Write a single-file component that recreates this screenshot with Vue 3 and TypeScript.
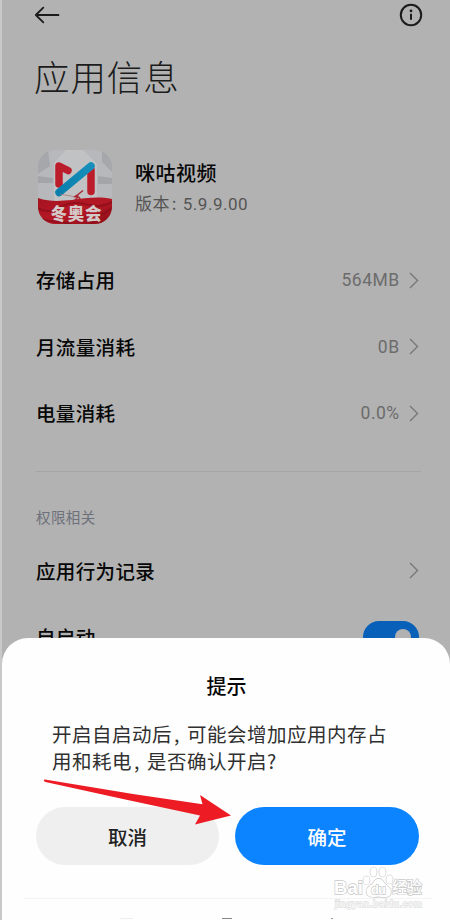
<script setup lang="ts">
interface InfoRow {
  label: string
  value: string
}

const usage: InfoRow[] = [
  { label: '存储占用', value: '564MB' },
  { label: '月流量消耗', value: '0B' },
  { label: '电量消耗', value: '0.0%' },
]
</script>

<template>
  <div class="screen">
    <main class="page">
      <header class="bar">
        <svg class="back" width="26" height="18" viewBox="0 0 26 18">
          <path d="M24.500 9H1.800M9.300 1.600L1.800 9l7.500 7.400" />
        </svg>
        <svg class="about" width="24" height="24" viewBox="0 0 24 24">
          <circle cx="12" cy="12" r="10.200" />
          <path class="stem" d="M12 10.800v6" />
          <circle class="dot" cx="12" cy="7.900" r="1.400" />
        </svg>
      </header>
      <h1 class="title">应用信息</h1>

      <section class="app">
        <svg class="logo" width="74" height="74" viewBox="0 0 74 74">
          <defs>
            <clipPath id="logo-clip"><rect width="74" height="74" rx="17" /></clipPath>
            <linearGradient id="wave" x1="0" y1="0" x2="1" y2="1">
              <stop offset="0" stop-color="#a51220" />
              <stop offset=".5" stop-color="#b51825" />
              <stop offset="1" stop-color="#8c0d18" />
            </linearGradient>
            <linearGradient id="stripe" x1="0" y1="1" x2="1" y2="0">
              <stop offset="0" stop-color="#087fac" />
              <stop offset="1" stop-color="#178fba" />
            </linearGradient>
          </defs>
          <g clip-path="url(#logo-clip)">
            <rect width="74" height="74" fill="#a5a7aa" />
            <path d="M10 0h54v12l10 10v35H0V24l12-8z" fill="#b7b8bb" />
            <path d="M28 0h17l14 14v38H16V13z" fill="#c1c2c4" />
            <path d="M0 26l15 2v5H0zM60 26l14 2v6H60z" fill="#a3a5a9" />
            <path d="M21 34V16l9 4.500M53 20v21.500" class="red-bar" />
            <path d="M21 42.500L53 16" class="blue-bar" />
            <path d="M22 44c5 1.500 10 1 15 3.500" class="trail" />
            <path d="M45 40.500l-5 4-3 2 4 1 2 3M40 45l-1 3-3 3" class="skier" />
            <path d="M0 48c12 4 22 3 34 2 14-2 26-4 40-1v25H0z" fill="url(#wave)" />
            <path d="M0 58c14 10 25-8 41-5s22 5 33-1" class="fold" />
            <path d="M0 67c10 6 21 3 33 7M74 58c-8 6-15 8-21 15" class="fold" />
          </g>
          <text class="logo-text" x="12.500" y="69.500" textLength="51">冬奥会</text>
        </svg>
        <div class="meta">
          <div class="name">咪咕视频</div>
          <div class="version">版本<span class="colon">:</span><span class="number">5.9.9.00</span></div>
        </div>
      </section>

      <ul class="rows usage">
        <li v-for="row in usage" :key="row.label" class="row">
          <span class="label">{{ row.label }}</span>
          <span class="value">{{ row.value }}</span>
          <svg class="chevron" width="10" height="17" viewBox="0 0 10 17"><path d="M1 1l7.500 7.500L1 16" /></svg>
        </li>
      </ul>

      <h2 class="section">权限相关</h2>
      <ul class="rows">
        <li class="row">
          <span class="label">应用行为记录</span>
          <svg class="chevron" width="10" height="17" viewBox="0 0 10 17"><path d="M1 1l7.500 7.500L1 16" /></svg>
        </li>
        <li class="row">
          <span class="label">自启动</span>
          <span class="switch"><span class="knob"></span></span>
        </li>
      </ul>
    </main>

    <section class="sheet">
      <h3 class="sheet-title">提示</h3>
      <p class="message">开启自启动后<span class="comma">,</span>可能会增加应用内存占<br />用和耗电<span class="comma">,</span>是否确认开启<span class="question">?</span></p>
      <div class="actions">
        <button class="btn cancel">取消</button>
        <button class="btn confirm">确定</button>
      </div>
      <div class="foot"><i class="tab-a"></i><i class="tab-b"></i><i class="tab-c"></i></div>
    </section>

    <svg class="arrow" width="190" height="50" viewBox="0 0 190 50">
      <path d="M3 .500C1.500.500 1.500 2.500 3.500 3L81 20l77 16.600-5 8.900L189 36.500 158 16l2.500 9.300-69.500-10.300z" />
    </svg>

    <svg class="mark" width="96" height="46" viewBox="0 0 96 46">
      <g class="outlined">
        <text class="brand" x="3" y="29.500" textLength="29">Bai</text>
        <path d="M35.500 28c-1-5 5-6 8-11 2.500-3 6-3 8.500 0 3 5 8 6 8 11 0 6-6 5.500-12 4.500-6 1-12 1-12.500-4.500z" />
        <ellipse cx="35.500" cy="16.500" rx="3.200" ry="4.200" />
        <ellipse cx="42.500" cy="8" rx="3.200" ry="4.700" />
        <ellipse cx="51.500" cy="8" rx="3.200" ry="4.700" />
        <ellipse cx="58.500" cy="15.500" rx="3.200" ry="4.200" />
        <text class="du" x="40" y="29.500" textLength="15">du</text>
        <text class="cn" x="61" y="29" textLength="30">经验</text>
      </g>
      <text class="url" x="4" y="42.500" textLength="87">jingyan.baidu.com</text>
    </svg>
  </div>
</template>

<style>
body {
  margin: 0;
  overflow: hidden;
}
</style>

<style scoped>
.screen {
  position: relative;
  box-sizing: border-box;
  width: 450px;
  height: 920px;
  overflow: hidden;
  background: #b2b2b2;
  border-left: 2px solid #c9c9c9;
  font-family: "Noto Sans CJK SC", "Noto Sans", sans-serif;
  color: #080808;
}
.page {
  padding: 0 29px 0 34px;
}
.bar {
  display: flex;
  align-items: center;
  justify-content: space-between;
  height: 30px;
  margin-right: -2px;
}
.bar svg {
  fill: none;
  stroke: #1b1b1b;
  stroke-width: 1.800;
  stroke-linecap: round;
  stroke-linejoin: round;
}
.back {
  margin-left: -2px;
}
.bar .about {
  stroke-width: 2;
}
.about .stem {
  stroke-linecap: butt;
}
.bar .about .dot {
  fill: #1b1b1b;
  stroke: none;
}
.title {
  margin: 21px 0 0 -2px;
  height: 50px;
  line-height: 50px;
  font-size: 35.500px;
  font-weight: 300;
  letter-spacing: .900px;
  color: #1c1c1c;
}
.app {
  display: flex;
  height: 74px;
  margin-top: 48.500px;
  padding-left: 2px;
}
.red-bar {
  fill: none;
  stroke: #bc1d2b;
  stroke-width: 7.500;
  stroke-linecap: round;
  stroke-linejoin: round;
}
.blue-bar {
  stroke: url(#stripe);
  stroke-width: 7.500;
  stroke-linecap: round;
}
.trail {
  fill: none;
  stroke: #aa6a70;
  stroke-width: .700;
}
.skier {
  fill: none;
  stroke: #aa2631;
  stroke-width: 1.500;
}
.fold {
  fill: none;
  stroke: #780914;
  stroke-width: 2;
  opacity: .5;
}
.logo-text {
  font-size: 16.500px;
  font-weight: 900;
  fill: #d3c9c9;
}
.meta {
  padding: 6px 0 0 23px;
}
.name {
  height: 33px;
  line-height: 33px;
  font-size: 20px;
  font-weight: 500;
  letter-spacing: .500px;
}
.version {
  height: 27px;
  line-height: 27px;
  font-size: 17px;
  letter-spacing: .400px;
  color: #555;
}
.number {
  font-family: Roboto, "Noto Sans", sans-serif;
  letter-spacing: .500px;
}
.colon {
  display: inline-block;
  width: 13px;
  text-indent: 2px;
}
.rows {
  margin: 0;
  padding: 0;
  list-style: none;
}
.usage {
  padding: 23.500px 0 24px;
  border-bottom: 1px solid #a5a5a5;
}
.row {
  display: flex;
  align-items: center;
  height: 66.500px;
  padding-right: 2px;
}
.label {
  flex: 1;
  font-size: 19.500px;
  font-weight: 500;
  letter-spacing: .350px;
  line-height: 28px;
}
.value {
  margin-right: 9.500px;
  font-family: Roboto, "Noto Sans", sans-serif;
  font-size: 17.500px;
  letter-spacing: .450px;
  line-height: 28px;
  color: #6c6c6c;
}
.chevron {
  fill: none;
  stroke: #777;
  stroke-width: 1.400;
}
.section {
  margin: 32px 0 0;
  height: 26px;
  line-height: 26px;
  font-size: 14.500px;
  font-weight: 400;
  letter-spacing: .400px;
  color: #6e717b;
  padding-bottom: 8px;
}
.switch {
  display: flex;
  justify-content: flex-end;
  box-sizing: border-box;
  width: 56px;
  height: 32px;
  padding: 8px;
  border-radius: 16px;
  background: #0860b8;
}
.knob {
  width: 16px;
  height: 16px;
  border-radius: 50%;
  background: #b2b2b2;
}
.sheet {
  position: absolute;
  left: 0;
  right: 0;
  top: 637.500px;
  height: 283px;
  border-radius: 26px 26px 0 0;
  background: #fefefe;
}
.sheet-title {
  margin: 34px 0 0 1px;
  height: 28px;
  line-height: 28px;
  text-align: center;
  font-size: 20px;
  font-weight: 500;
}
.message {
  margin: 20px 0 0 50px;
  line-height: 27.500px;
  font-size: 19.500px;
  letter-spacing: .500px;
  font-weight: 400;
  color: #303030;
  white-space: nowrap;
}
.comma {
  display: inline-block;
  width: 15px;
  text-indent: 2px;
}
.question {
  display: inline-block;
}
.actions {
  display: flex;
  justify-content: space-between;
  margin: 32px 31px 0 34px;
}
.btn {
  width: 183px;
  height: 58px;
  padding: 0;
  border: 0;
  border-radius: 29px;
  font: 500 19.500px/59px "Noto Sans CJK SC", sans-serif;
}
.cancel {
  background: #efefef;
  color: #222;
}
.confirm {
  width: 184px;
  background: #0d84ff;
  color: #fff;
}
.foot {
  display: flex;
  align-items: flex-end;
  height: 20.500px;
  margin: 33px 18px 0 22px;
  padding-left: 96px;
  border-top: 1px solid #f3f3f3;
}
.foot i {
  height: 1px;
}
.tab-a {
  width: 13px;
  background: #eee;
}
.tab-b {
  width: 10px;
  margin-left: 89px;
  background: #888;
}
.tab-c {
  width: 2px;
  margin-left: 99px;
  background: #999;
}
.arrow {
  position: absolute;
  left: 40px;
  top: 779px;
  fill: #ed1c24;
}
.mark {
  position: absolute;
  left: 329px;
  top: 864px;
}
.outlined {
  fill: #fff;
  stroke: #c8c8c8;
  stroke-width: 1.300;
  paint-order: stroke;
}
.brand,
.du {
  font-family: "Liberation Sans", sans-serif;
  font-weight: 700;
}
.brand {
  font-size: 18.500px;
}
.du {
  font-size: 13px;
}
.cn {
  font-size: 15.500px;
  font-weight: 500;
}
.url {
  font-family: "Liberation Sans", sans-serif;
  font-size: 9.500px;
  fill: #fff;
  stroke: #dcdcdc;
  stroke-width: 1.300;
  paint-order: stroke;
}
</style>
